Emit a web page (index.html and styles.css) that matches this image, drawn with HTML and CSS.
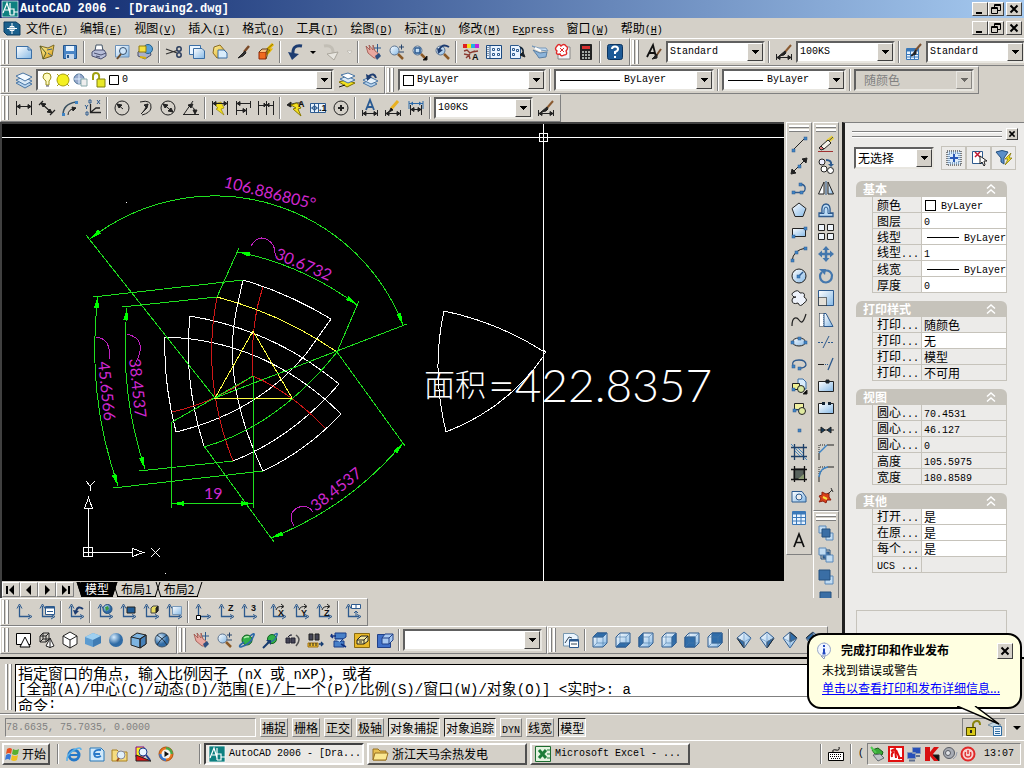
FILE: index.html
```html
<!DOCTYPE html>
<html lang="zh-CN">
<head>
    <meta charset="UTF-8">
    <meta name="viewport" content="width=device-width, initial-scale=1.0">
    <title>AutoCAD 2006 - [Drawing2.dwg]</title>
    <link rel="stylesheet" href="styles.css">
</head>
<body>
    <svg class="defs" aria-hidden="true">
        <defs>
            <linearGradient id="ice" x1="0" y1="0" x2="1" y2="1"><stop offset="0" stop-color="#fff"/><stop offset="1" stop-color="#86b9e6"/></linearGradient>
            <linearGradient id="gold" x1="0" y1="0" x2="1" y2="1"><stop offset="0" stop-color="#fff6a0"/><stop offset="1" stop-color="#d99a10"/></linearGradient>
            <radialGradient id="ball" cx=".35" cy=".3"><stop offset="0" stop-color="#d8eeff"/><stop offset="1" stop-color="#2f6ba5"/></radialGradient>
        </defs>
    </svg>

    <header class="titlebar">
        <span class="icon" data-icon="acad"></span>
        <h1>AutoCAD 2006 - [Drawing2.dwg]</h1>
        <div class="winbtns"><button aria-label="最小化" data-icon="min"></button><button aria-label="还原" data-icon="restore"></button><button aria-label="关闭" class="close" data-icon="x"></button></div>
    </header>

    <nav class="menubar">
        <span class="icon" data-icon="doc"></span>
        <button>文件<span class="en">(<u>F</u>)</span></button>
        <button>编辑<span class="en">(<u>E</u>)</span></button>
        <button>视图<span class="en">(<u>V</u>)</span></button>
        <button>插入<span class="en">(<u>I</u>)</span></button>
        <button>格式<span class="en">(<u>O</u>)</span></button>
        <button>工具<span class="en">(<u>T</u>)</span></button>
        <button>绘图<span class="en">(<u>D</u>)</span></button>
        <button>标注<span class="en">(<u>N</u>)</span></button>
        <button>修改<span class="en">(<u>M</u>)</span></button>
        <button><span class="en">E<u>x</u>press</span></button>
        <button>窗口<span class="en">(<u>W</u>)</span></button>
        <button>帮助<span class="en">(<u>H</u>)</span></button>
        <div class="winbtns"><button aria-label="最小化文档" data-icon="min"></button><button aria-label="还原文档" data-icon="restore"></button><button aria-label="关闭文档" class="close" data-icon="x"></button></div>
    </nav>

    <div class="row">
        <div class="toolbar">
            <span class="tools" data-tools="new open save | print preview publish | cut copyclip paste brush match | undo dd redo ddoff | pan zoomrt zoomwin zoomprev | props dcenter palettes sheetset markup calc | help"></span>
        </div>
        <div class="toolbar">
            <span class="tools" data-tools="textstyle"></span>
            <label class="combo"><select aria-label="文字样式"><option>Standard</option></select></label>
            <span class="tools" data-tools="| dimstyle"></span>
            <label class="combo"><select aria-label="标注样式"><option>100KS</option></select></label>
            <span class="tools" data-tools="| tablestyle"></span>
            <label class="combo"><select aria-label="表格样式"><option>Standard</option></select></label>
        </div>
    </div>
    <div class="row">
        <div class="toolbar">
            <span class="tools" data-tools="layers"></span>
            <label class="combo layer"><span class="over" data-icon="layerstate"></span><select aria-label="图层"><option>0</option></select></label>
            <span class="tools" data-tools="laycur layprev"></span>
        </div>
        <div class="toolbar">
            <label class="combo color"><span class="over swatch"></span><select aria-label="颜色"><option>ByLayer</option></select></label>
            <span class="tools" data-tools="|"></span>
            <label class="combo ltype"><span class="over rule"></span><select aria-label="线型"><option>ByLayer</option></select></label>
            <span class="tools" data-tools="|"></span>
            <label class="combo lweight"><span class="over rule"></span><select aria-label="线宽"><option>ByLayer</option></select></label>
            <span class="tools" data-tools="|"></span>
            <label class="combo plot"><select aria-label="打印样式" disabled><option>随颜色</option></select></label>
        </div>
    </div>
    <div class="row">
        <div class="toolbar">
            <span class="tools" data-tools="dimlin dimali dimarc dimord | dimrad dimjog dimdia dimang | qdim dimbase dimcont | leader tol center | dimedit dimtedit dimupd |"></span>
            <label class="combo"><select aria-label="当前标注样式"><option>100KS</option></select></label>
            <span class="tools" data-tools="dimstyle"></span>
        </div>
    </div>

    <div class="work">
        <div class="left">
            <div class="view">
                <div class="model">
                    <svg class="drawing" viewBox="2 124 782 457">
                        <defs>
                            <marker id="arrow" viewBox="0 0 10 4" refX="10" refY="2" markerWidth="12" markerHeight="5" markerUnits="userSpaceOnUse" orient="auto-start-reverse"><path d="M0 0L10 2L0 4z" fill="#0f0"/></marker>
                        </defs>
                        <text class="area" x="424" y="396">面积</text>
                        <text class="sum" x="488" y="402">=422.8357</text>
                        <!-- parts -->
                        <g class="white">
                            <path d="M243 280Q288 293 331 319L306 354Q258 412 176 432Q163 380 165 337Q266 340 341 414Q306 451 263 471Q222 385 236 312L243 280"/>
                            <path d="M204 446Q183 380 190 316Q274 330 339 384Q292 438 233 461"/>
                            <path d="M444 311Q497 322 543 351M543 357Q506 409 446 432Q431 370 444 311M543 350l3 2l-3 3"/>
                            <path d="M126 202h1M165 573h1"/>
                        </g>
                        <g class="red">
                            <path d="M217 297Q201 380 233 461M263 287Q250 325 253 376Q292 393 325 428M172 412Q213 403 253 376"/>
                        </g>
                        <g class="yellow">
                            <path d="M217 297Q282 314 337 352M215 398H292L253 331z"/>
                        </g>
                        <!-- dimensions -->
                        <g class="green">
                            <path d="M86 235L215 398L407 324M239 248L217 297M359 301L337 352L405 446M93 297L243 280M122 307L217 297M113 488L263 471M139 471L233 461M204 446L274 542M172 422L253 376M171.500 422V508M253.500 376V508M337 352Q278 426 204 447"/>
                            <g marker-start="url(#arrow)" marker-end="url(#arrow)">
                                <path d="M90 239A202 202 0 0 1 403 325"/>
                                <path d="M238 252A300 300 0 0 1 357 305"/>
                                <path d="M98 296A420 420 0 0 0 118 486"/>
                                <path d="M127 308A390 390 0 0 0 145 469"/>
                                <path d="M271 538A330 330 0 0 0 403 443"/>
                                <path d="M172 503.500H253"/>
                            </g>
                        </g>
                        <g class="dims">
                            <text transform="translate(223 187) rotate(14)">106.886805°</text>
                            <text transform="translate(274 258) rotate(23)">30.6732</text>
                            <text transform="translate(98 362) rotate(84)">45.6566</text>
                            <text transform="translate(129 359) rotate(84)">38.4537</text>
                            <text transform="translate(316 512) rotate(-38)">38.4537</text>
                            <text x="204" y="499">19</text>
                            <path d="M251 246Q258 234 268 240Q276 245 275 256M96 337Q112 339 109 359M127 334Q148 339 136 362M294 526Q287 514 297 508Q307 503 313 512"/>
                        </g>
                        <!-- ucs icon and crosshair -->
                        <g class="white">
                            <path d="M83.500 547.500h9v9h-9zM88.500 556V509M84 552.500H132M84.500 508.500h8l-4 -11zM132.500 548.500v8l11 -4z"/>
                            <path d="M86 481l4 5l5 -5M90.500 486v5M151 548l9 9M160 548l-9 9"/>
                            <path d="M2 137.500H784M543.500 124V581M539.500 133.500h8v8h-8z"/>
                        </g>
                    </svg>
                    <div class="tabs">
                        <button class="nav" aria-label="第一个" data-icon="first"></button><button class="nav" aria-label="上一个" data-icon="prev"></button><button class="nav" aria-label="下一个" data-icon="next"></button><button class="nav" aria-label="最后一个" data-icon="last"></button>
                        <button class="tab on">模型</button><button class="tab">布局1</button><button class="tab">布局2</button>
                    </div>
                </div>
                <div class="dock">
                    <div class="toolbar vert">
                        <span class="tools" data-tools="line xline pline polygon rect arc circle cloud spline ellipse ellarc insblock mkblock point hatch gradient region table mtext"></span>
                    </div>
                </div>
                <div class="dock">
                    <div class="toolbar vert">
                        <span class="tools" data-tools="erase copy mirror offset array move rotate scale stretch trim extend breakpt break join chamfer fillet explode"></span>
                    </div>
                    <div class="toolbar vert">
                        <span class="tools" data-tools="front back above under"></span>
                    </div>
                </div>
            </div>
            <div class="lower">
                <div class="row">
                    <div class="toolbar">
                        <span class="tools" data-tools="ucs ucsdlg | ucsprev | ucsworld ucsobj ucsface ucsview | ucsorg ucsz ucs3 | ucsrx ucsry ucsrz | ucsapply"></span>
                    </div>
                </div>
                <div class="row">
                    <div class="toolbar">
                        <span class="tools" data-tools="wire2d wire3d hidden flat gouraud flatedge gouredge"></span>
                    </div>
                    <div class="toolbar">
                        <span class="tools" data-tools="pan zoomrt orbit corbit swivel dist clip front3 back3 |"></span>
                        <label class="combo views"><select aria-label="视图"><option></option></select></label>
                    </div>
                    <div class="toolbar">
                        <span class="tools" data-tools="named | vtop vbottom vleft vright vfront vback | vsw vse vne vnw"></span>
                    </div>
                </div>
            </div>
        </div>

        <aside class="props">
            <div class="caption"><span class="bars"></span><button aria-label="关闭特性" data-icon="x"></button></div>
            <div class="pick">
                <label class="combo zh"><select aria-label="选择对象"><option>无选择</option></select></label>
                <div class="picks"><button aria-label="PICKADD" data-icon="pickadd"></button><button aria-label="选择对象" data-icon="selobj"></button><button aria-label="快速选择" data-icon="qselect"></button></div>
            </div>
            <section>
                <h2>基本<span class="icon" data-icon="chev"></span></h2>
                <table>
                    <tr><th>颜色</th><td><span class="swatch"></span><span class="en">ByLayer</span></td></tr>
                    <tr><th>图层</th><td><span class="en">0</span></td></tr>
                    <tr><th>线型</th><td><span class="rule"></span><span class="en">ByLayer</span></td></tr>
                    <tr><th>线型<span class="en">...</span></th><td><span class="en">1</span></td></tr>
                    <tr><th>线宽</th><td><span class="rule"></span><span class="en">ByLayer</span></td></tr>
                    <tr><th>厚度</th><td><span class="en">0</span></td></tr>
                </table>
            </section>
            <section>
                <h2>打印样式<span class="icon" data-icon="chev"></span></h2>
                <table>
                    <tr><th>打印<span class="en">...</span></th><td class="ro">随颜色</td></tr>
                    <tr><th>打印<span class="en">...</span></th><td>无</td></tr>
                    <tr><th>打印<span class="en">...</span></th><td class="ro">模型</td></tr>
                    <tr><th>打印<span class="en">...</span></th><td class="ro">不可用</td></tr>
                </table>
            </section>
            <section>
                <h2>视图<span class="icon" data-icon="chev"></span></h2>
                <table>
                    <tr><th>圆心<span class="en">...</span></th><td class="ro"><span class="en">70.4531</span></td></tr>
                    <tr><th>圆心<span class="en">...</span></th><td class="ro"><span class="en">46.127</span></td></tr>
                    <tr><th>圆心<span class="en">...</span></th><td class="ro"><span class="en">0</span></td></tr>
                    <tr><th>高度</th><td class="ro"><span class="en">105.5975</span></td></tr>
                    <tr><th>宽度</th><td class="ro"><span class="en">180.8589</span></td></tr>
                </table>
            </section>
            <section>
                <h2>其他<span class="icon" data-icon="chev"></span></h2>
                <table>
                    <tr><th>打开<span class="en">...</span></th><td>是</td></tr>
                    <tr><th>在原<span class="en">...</span></th><td>是</td></tr>
                    <tr><th>每个<span class="en">...</span></th><td>是</td></tr>
                    <tr><th><span class="en">UCS ...</span></th><td class="ro"></td></tr>
                </table>
            </section>
            <div class="hint"></div>
        </aside>
    </div>

    <section class="command">
        <span class="grip"></span>
        <div class="console">
            <p><span class="c">指定窗口的角点，输入比例因子</span> (nX <span class="c">或</span> nXP)<span class="c">，或者</span></p>
            <p>[<span class="c">全部</span>(A)/<span class="c">中心</span>(C)/<span class="c">动态</span>(D)/<span class="c">范围</span>(E)/<span class="c">上一个</span>(P)/<span class="c">比例</span>(S)/<span class="c">窗口</span>(W)/<span class="c">对象</span>(O)] &lt;<span class="c">实时</span>&gt;: a</p>
            <label class="prompt"><span class="c">命令</span>:<input type="text" aria-label="命令"></label>
        </div>
    </section>

    <footer class="status">
        <output class="coords">78.6635, 75.7035, 0.0000</output>
        <button>捕捉</button>
        <button>栅格</button>
        <button>正交</button>
        <button>极轴</button>
        <button class="on">对象捕捉</button>
        <button class="on">对象追踪</button>
        <button><span class="en">DYN</span></button>
        <button>线宽</button>
        <button class="on">模型</button>
        <div class="locks"><span class="icon" data-icon="lock"></span><span class="icon" data-icon="plotter"></span></div>
        <span class="more"></span>
    </footer>

    <div class="taskbar">
        <button class="start"><span class="icon" data-icon="flag"></span>开始</button>
        <span class="split"></span>
        <div class="quick"><span class="icon" data-icon="ie"></span><span class="icon" data-icon="outlook"></span><span class="icon" data-icon="search"></span><span class="icon" data-icon="view"></span><span class="icon" data-icon="wmp"></span></div>
        <span class="split"></span>
        <button class="task on"><span class="icon" data-icon="acad"></span><span class="en">AutoCAD 2006 - [Dra...</span></button>
        <button class="task"><span class="icon" data-icon="folder"></span>浙江天马余热发电</button>
        <button class="task"><span class="icon" data-icon="excel"></span><span class="en">Microsoft Excel - ...</span></button>
        <div class="lang"><span class="split"></span><span class="icon" data-icon="keyboard"></span><span class="split"></span><span class="en">(</span></div>
        <div class="tray"><span class="icon" data-icon="safe"></span><span class="icon" data-icon="rising"></span><span class="icon" data-icon="net"></span><span class="icon" data-icon="kav"></span><span class="icon" data-icon="sound"></span><span class="icon" data-icon="power"></span><time class="en">13:07</time></div>
    </div>

    <div class="balloon" role="status">
        <h3><span class="icon" data-icon="info"></span>完成打印和作业发布</h3>
        <button aria-label="关闭" data-icon="x"></button>
        <p>未找到错误或警告</p>
        <a href="#">单击以查看打印和发布详细信息...</a>
        <svg class="tail" viewBox="0 0 46 20"><path d="M0 0L42 18L18 0" fill="#ffffe1" stroke="#000" stroke-width="1.500"/></svg>
    </div>

    <script src="script.js"></script>
</body>
</html>
```

FILE: styles.css
```css
*, *::before, *::after {
    box-sizing: border-box;
}
body {
    margin: 0;
    height: 100vh;
    display: flex;
    flex-direction: column;
    overflow: hidden;
    position: relative;
    background: #d4d0c8;
    color: #000;
    font: 12px/16px "Noto Sans CJK SC", sans-serif;
}
h1, h2, h3, p {
    margin: 0;
}
button, select, input {
    font: inherit;
    color: inherit;
    margin: 0;
    padding: 0;
    border: 0;
    background: none;
    border-radius: 0;
}
.en {
    font-family: "Liberation Mono", monospace;
    font-size: 10px;
    line-height: 10px;
}
.defs {
    position: absolute;
    width: 0;
    height: 0;
}
.icon, [data-icon] {
    display: inline-flex;
    align-items: center;
    justify-content: center;
    flex: none;
}
svg.i {
    width: 16px;
    height: 16px;
    flex: none;
    fill: none;
    stroke: #222;
    overflow: visible;
}
svg.i text {
    font: bold 9px "Liberation Sans", sans-serif;
    fill: #111;
    stroke: none;
}

/* title and menu */
.titlebar {
    height: 18px;
    flex: none;
    display: flex;
    align-items: center;
    gap: 2px;
    padding-left: 2px;
    background: linear-gradient(to right, #0a246a, #a6caf0);
    color: #fff;
}
.titlebar h1 {
    font: bold 12px/18px "Liberation Mono", monospace;
}
.menubar {
    height: 20px;
    flex: none;
    display: flex;
    align-items: center;
    padding-left: 4px;
}
.menubar > button {
    padding: 0 6px;
    white-space: nowrap;
}
.winbtns {
    display: flex;
    margin-left: auto;
    padding-right: 2px;
}
.winbtns button, .caption button, .balloon button {
    width: 16px;
    height: 14px;
    background: #d4d0c8;
    border: 1px solid;
    border-color: #fff #404040 #404040 #fff;
}
.winbtns .close {
    margin-left: 2px;
}

/* toolbars */
.row {
    height: 28px;
    flex: none;
    display: flex;
    overflow: hidden;
}
.toolbar {
    display: flex;
    align-items: center;
    flex: none;
    padding: 0 3px 0 1px;
    border: 1px solid;
    border-color: #fff #808080 #808080 #fff;
}
.toolbar::before, .grip {
    content: "";
    flex: none;
    width: 8px;
    height: 24px;
    margin-right: 2px;
    background: linear-gradient(to right, #fff 2px, #808080 2px, #808080 3px, #d4d0c8 3px, #d4d0c8 4px, #fff 4px, #fff 6px, #808080 6px, #808080 7px, #d4d0c8 7px);
}
.tools {
    display: flex;
    align-items: center;
}
.tools button {
    width: 23px;
    height: 22px;
    display: flex;
    align-items: center;
    justify-content: center;
}
.tools .dd {
    width: 13px;
}
.sep {
    width: 2px;
    height: 22px;
    margin: 0 2px;
    border-left: 1px solid #808080;
    border-right: 1px solid #fff;
}
.combo {
    position: relative;
    display: block;
    height: 22px;
    width: 99px;
    margin: 0 1px;
    background: #fff;
    border: 2px solid;
    border-color: #606060 #e8e6e0 #e8e6e0 #606060;
}
.combo::after {
    content: "";
    position: absolute;
    right: 0;
    top: 0;
    width: 16px;
    height: 18px;
    pointer-events: none;
    border: 1px solid;
    border-color: #fff #404040 #404040 #fff;
    background: linear-gradient(#000, #000) 50% 6px / 7px 1px no-repeat, linear-gradient(#000, #000) 50% 7px / 5px 1px no-repeat, linear-gradient(#000, #000) 50% 8px / 3px 1px no-repeat, linear-gradient(#000, #000) 50% 9px / 1px 1px no-repeat, #d4d0c8;
}
.combo select {
    display: block;
    appearance: none;
    width: 100%;
    height: 18px;
    padding-left: 2px;
    font: 10px/18px "Liberation Mono", monospace;
}
.combo.zh select, .combo.plot select {
    font: 12px/18px "Noto Sans CJK SC", sans-serif;
}
.over {
    position: absolute;
    left: 4px;
    top: 0;
    height: 18px;
    pointer-events: none;
}
.over svg.i {
    width: 78px;
    height: 18px;
}
.swatch {
    display: inline-block;
    width: 11px;
    height: 11px;
    border: 1px solid #000;
    background: #fff;
}
.rule {
    display: inline-block;
    width: 32px;
    height: 1px;
    background: #000;
    vertical-align: middle;
}
.over.swatch {
    top: 4px;
    left: 3px;
    height: 11px;
}
.over.rule {
    top: 9px;
    height: 1px;
}
.combo.layer {
    width: 298px;
}
.combo.layer select {
    padding-left: 84px;
}
.combo.color {
    width: 148px;
}
.combo.color select {
    padding-left: 17px;
}
.combo.ltype {
    width: 160px;
}
.ltype .rule {
    width: 60px;
}
.combo.ltype select {
    padding-left: 68px;
}
.combo.lweight {
    width: 124px;
}
.lweight .rule {
    width: 35px;
}
.combo.lweight select {
    padding-left: 43px;
}
.combo.plot {
    width: 120px;
    background: #d4d0c8;
}
.combo.plot::after {
    opacity: 0.5;
}
.combo.plot select {
    padding-left: 8px;
    color: #808080;
    opacity: 1;
}
.combo.views {
    width: 139px;
}

/* work area */
.work {
    flex: 1;
    min-height: 0;
    display: grid;
    grid-template-columns: 1fr 182px;
}
.left {
    min-width: 0;
    min-height: 0;
    display: flex;
    flex-direction: column;
}
.view {
    flex: 1;
    min-height: 0;
    display: flex;
    overflow: hidden;
}
.model {
    flex: 1;
    min-width: 0;
    display: flex;
    flex-direction: column;
    border: solid #404040;
    border-width: 2px 0 0 2px;
}
.drawing {
    flex: 1;
    min-height: 0;
    width: 100%;
    display: block;
    background: #000;
    fill: none;
    stroke-width: 1;
    shape-rendering: crispEdges;
}
.white {
    stroke: #fff;
}
.red {
    stroke: #d01818;
}
.yellow {
    stroke: #ff4;
}
.green {
    stroke: #1fe01f;
}
.area {
    font: 300 31px "Noto Sans CJK SC", sans-serif;
    fill: #fff;
}
.sum {
    font: 300 46px "Lato", sans-serif;
    fill: #fff;
}
.dims {
    stroke: #c020c0;
}
.dims text {
    font: 16px "Lato", sans-serif;
    fill: #d028d0;
    stroke: none;
}
.tabs {
    height: 17px;
    flex: none;
    display: flex;
    align-items: center;
    background: #d4d0c8;
}
.nav {
    width: 18px;
    height: 15px;
    border: 1px solid;
    border-color: #fff #808080 #808080 #fff;
}
.tab {
    position: relative;
    height: 15px;
    padding: 0 4px;
    margin-left: 4px;
    line-height: 14px;
    border-bottom: 1px solid #000;
}
.tab::before, .tab::after {
    content: "";
    position: absolute;
    top: 0;
    bottom: -1px;
    left: -2px;
    width: 4px;
    border-left: 1px solid #000;
    transform: skewX(18deg);
}
.tab::after {
    left: auto;
    right: -2px;
    border-left: 0;
    border-right: 1px solid #000;
    transform: skewX(-18deg);
}
.tab.on {
    background: #000;
    color: #fff;
    margin-left: 7px;
}
.tab.on::before, .tab.on::after {
    background: #000;
}
.dock {
    width: 29px;
    flex: none;
    display: flex;
    flex-direction: column;
}
.model + .dock {
    padding-left: 2px;
}
.vert {
    width: 26px;
    flex-direction: column;
    padding: 2px 0 3px;
}
.vert::before {
    width: 20px;
    height: 8px;
    margin: 0;
    background: linear-gradient(#fff 2px, #808080 2px, #808080 3px, #d4d0c8 3px, #d4d0c8 4px, #fff 4px, #fff 6px, #808080 6px, #808080 7px, #d4d0c8 7px);
}
.vert .tools {
    flex-direction: column;
}
.lower {
    flex: none;
    height: 59px;
    overflow: hidden;
}

/* properties palette */
.props {
    min-height: 0;
    overflow: hidden;
    background: #ecebe9;
    border-left: 3px solid #202020;
    border-top: 1px solid #808080;
    padding: 3px 17px 0 11px;
}
.caption {
    display: flex;
    align-items: center;
    gap: 4px;
    height: 16px;
    margin: 0 -11px 5px -4px;
}
.bars {
    flex: 1;
    height: 6px;
    border: solid #808080;
    border-width: 1px 0;
    box-shadow: inset 0 1px #fff, 0 1px #fff;
}
.caption button {
    width: 12px;
    height: 12px;
}
.caption svg.i {
    width: 12px;
    height: 12px;
}
.pick {
    display: flex;
    align-items: center;
    gap: 6px;
    height: 22px;
    margin: 0 -7px 12px -3px;
}
.pick .combo {
    width: 80px;
    flex: none;
}
.picks {
    display: flex;
}
.picks button {
    width: 25px;
    height: 24px;
    border: 1px solid #c6c3bb;
}
.props section {
    margin-bottom: 8px;
}
.props h2 {
    height: 16px;
    display: flex;
    justify-content: space-between;
    padding: 0 8px 0 7px;
    background: #c6c3bb;
    border-radius: 6px 6px 0 0;
    color: #fff;
    font-size: 12px;
    line-height: 15px;
}
.props table {
    width: calc(100% - 16px);
    margin-left: 16px;
    border-spacing: 0;
    table-layout: fixed;
    border-left: 1px solid #c6c3bb;
}
.props th, .props td {
    height: 16px;
    padding: 0 0 0 4px;
    overflow: hidden;
    border: solid #c6c3bb;
    border-width: 0 1px 1px 0;
    font-weight: normal;
    line-height: 13px;
    text-align: left;
    white-space: nowrap;
}
.props td {
    padding-left: 2px;
    background: #fff;
}
.props th {
    width: 49px;
}
.props td.ro {
    background: #ecebe9;
}
td .swatch {
    margin: 0 5px 0 1px;
    vertical-align: middle;
}
td .rule {
    margin: 0 5px 0 3px;
}
.hint {
    height: 60px;
    margin-top: 37px;
    border: 1px solid #c6c3bb;
}

/* command line */
.command {
    height: 57px;
    flex: none;
    display: flex;
    padding: 5px 24px 1px 5px;
    border-top: 2px solid #000;
    border-bottom: 1px solid #808080;
}
.command .grip {
    height: 46px;
}
.console {
    flex: 1;
    padding: 0 2px;
    overflow: hidden;
    background: #fff;
    border: 1px solid #000;
    border-color: #000 #fff #fff #000;
    font: 14px/15px "Liberation Mono", monospace;
    white-space: nowrap;
}
.c {
    font-family: "Noto Sans CJK SC", sans-serif;
    font-size: 15px;
}
.console p {
    height: 15px;
}
.prompt {
    display: flex;
    height: 17px;
    margin: 1px -2px 0;
    padding: 0 2px;
    border-top: 1px solid #808080;
}
.prompt input {
    flex: 1;
    outline: 0;
}

/* status bar */
.status {
    height: 26px;
    flex: none;
    display: flex;
    align-items: center;
    gap: 4px;
    padding: 0 3px 0 5px;
    border-top: 1px solid #fff;
}
.coords {
    width: 251px;
    height: 19px;
    border: 1px solid #808080;
    border-right-color: #fff;
    border-bottom-color: #fff;
    color: #808080;
    font: 10px/17px "Liberation Mono", monospace;
}
.status button {
    height: 19px;
    padding: 0 1px;
    line-height: 17px;
    border: 1px solid;
    border-color: #fff #808080 #808080 #fff;
    white-space: nowrap;
}
.status .on {
    border-color: #202020 #fff #fff #202020;
    background: #e4e2dc;
}
.locks {
    display: flex;
    gap: 6px;
    margin-left: auto;
    height: 19px;
    padding: 0 2px;
    border: 1px solid;
    border-color: #808080 #fff #fff #808080;
}
.more {
    margin-left: 3px;
    border: 4px solid transparent;
    border-top-color: #000;
    border-bottom: 0;
}

/* taskbar */
.taskbar {
    height: 28px;
    flex: none;
    display: flex;
    align-items: center;
    gap: 3px;
    padding: 0 3px 2px 2px;
    border-top: 1px solid #fff;
}
.start, .task {
    display: flex;
    align-items: center;
    height: 22px;
    border: 2px solid;
    border-color: #fff #505050 #505050 #fff;
    white-space: nowrap;
}
.start {
    width: 48px;
    gap: 2px;
    margin-right: 4px;
}
.task {
    width: 160px;
    gap: 4px;
    padding-left: 3px;
}
.task.on {
    border-color: #404040 #fff #fff #404040;
    background: #ebe9e5;
}
.split {
    width: 2px;
    height: 20px;
    border-left: 1px solid #808080;
    border-right: 1px solid #fff;
}
.quick {
    display: flex;
    gap: 7px;
    padding: 0 22px 0 4px;
}
.lang {
    display: flex;
    align-items: center;
    gap: 6px;
    margin-left: auto;
}
.tray {
    display: flex;
    align-items: center;
    gap: 2px;
    height: 22px;
    padding: 0 6px 0 2px;
    border: 1px solid;
    border-color: #808080 #fff #fff #808080;
}
.tray time {
    margin-left: 6px;
}

/* balloon */
.balloon {
    position: absolute;
    right: 2px;
    bottom: 59px;
    width: 215px;
    height: 76px;
    padding: 6px 8px 0 13px;
    background: #ffffe1;
    border: 2px solid #000;
    border-radius: 14px;
}
.balloon h3 {
    display: flex;
    align-items: center;
    gap: 9px;
    height: 18px;
    margin-left: -6px;
    font-size: 12px;
}
.balloon p {
    height: 20px;
    line-height: 22px;
}
.balloon a {
    display: block;
    color: #00f;
    line-height: 18px;
    white-space: nowrap;
}
.balloon button {
    position: absolute;
    right: 7px;
    top: 8px;
    width: 16px;
    height: 16px;
}
.tail {
    position: absolute;
    left: 148px;
    top: 71px;
    width: 46px;
    height: 20px;
}
```

FILE: script.js
```js
const B = '#2d5a8e';

// shared pieces
const axes = `<path d="M3.500 2V12.500H14" stroke="${B}" stroke-width="1.300"/><path d="M1 4.500L3.500 0L6 4.500M12 10.500L16 12.500L12 15" stroke="${B}"/>`;
const lens = '<circle cx="6.500" cy="6.500" r="4.500" fill="url(#ice)" stroke="#5c7390"/><path d="M10 10L15 15" stroke="#8a5a28" stroke-width="2.500"/>';
const brush = '<path d="M15 1L9 8" stroke="#8a5a30" stroke-width="2"/><path d="M9 7L3 12L8 11L10 9z" fill="#222"/>';
const dimbar = '<path d="M.5 10v6M15.500 10v6M1 13.500h14"/><path d="M1 13.500l3 -2v4zM15 13.500l-3 -2v4z" fill="#222"/>';
const bolt = '<path d="M9 2L2 4L6 8L4 9L12 15L9 9L12 8z" fill="#f5e020" stroke="#8a7a00" stroke-width=".6"/>';
const spot = (x, y) => `<rect x="${x - 1}" y="${y - 1}" width="3" height="3" fill="#3f84c4" stroke="${B}" stroke-width=".5"/>`;

function cube(face) {
    const faces = {
        front: 'M1 5h10v10h-10z',
        top: 'M1 5L5 1H15L11 5z',
        right: 'M11 5L15 1V11L11 15z',
        back: 'M5 1h10v10h-10z',
        left: 'M1 5L5 1V11L1 15z',
        bottom: 'M1 15L5 11H15L11 15z'
    };
    return `<path d="M1 5L5 1H15V11L11 15H1z" fill="url(#ice)" stroke="${B}"/><path d="${faces[face]}" fill="#2f6daa" stroke="${B}"/><path d="M1 5H11V15M11 5L15 1M5 1V11H15M5 11L1 15" stroke="#4878aa" stroke-width=".6"/>`;
}

function gem(d) {
    return `<path d="M8 0L15 6L8 16L1 6z" fill="url(#ice)" stroke="${B}"/><path d="${d}" fill="#2f6daa"/><path d="M8 0V16M1 6L8 10L15 6" stroke="#6a9aca" stroke-width=".7"/>`;
}

const hand = '<path d="M1 2L5 6L4 1L8 6L8 1L10 7L13 9L13 14L9 14L3 9z" fill="#e8a8a0" stroke="#9a5048" stroke-width=".8"/><path d="M10 12l4 -3l2 3l-4 4z" fill="#2d4f80" stroke="none"/>';

const icons = {
    acad: '<rect width="16" height="16" fill="#0e8080" stroke="#fff" stroke-width=".7"/><path d="M1 12L5 2L8 12M3 9H7M8 2V14M8 8H12V14H8M12 11H16" stroke="#fff" stroke-width="1.200"/>',
    doc: '<path d="M0 2H12L16 5V15H3L0 12z" fill="#1b608c" stroke="#0d3d60"/><path d="M8 3V14M3 8.500H13M6 6.500h4v4h-4z" stroke="#fff"/>',
    min: '<path d="M4 12H10" stroke="#000" stroke-width="2"/>',
    restore: '<path d="M6.500 6V3.500H12.500V9.500H10M6 4.500H13M3.500 6.500H9.500V12.500H3.500zM3 7.500H10" stroke="#000"/>',
    x: '<path d="M4.500 4.500L11.500 11.500M11.500 4.500L4.500 11.500" stroke="#000" stroke-width="2"/>',
    'new': '<path d="M.5 2.500H12L15.500 6V14.500H.5z" fill="url(#ice)" stroke="#3a6ea5"/><path d="M12 2.500V6H15.500" stroke="#3a6ea5"/>',
    open: '<path d="M1 2L9 4L15 1L13 12L4 15z" fill="url(#gold)" stroke="#7a6820"/><path d="M1 2L7 9L4 15" stroke="#4a5a30"/><path d="M9 9L13 12M8 6L13 5" stroke="#406080"/>',
    save: '<path d="M1.500 1.500H14.500V14.500H1.500z" fill="#4b86c6" stroke="#24558c"/><path d="M4 2h8v5h-8z" fill="#e8f4ff" stroke="none"/><path d="M4 10h8v5h-8z" fill="#c8d8ea" stroke="none"/><path d="M6 11v3" stroke="#24558c" stroke-width="2"/>',
    print: '<path d="M4 7L5 1L11 1L12 7" fill="#fff" stroke="#456"/><path d="M1 8L4 6H13L15 9V12L10 15L1 12z" fill="#b7bdd8" stroke="#4a5070"/><path d="M3 9L10 11L15 9M5 12L9 13" stroke="#4a5070"/>',
    preview: '<path d="M1.500 1.500H15V13H1.500z" fill="url(#ice)" stroke="#6a90b8"/><circle cx="9" cy="7" r="3.500" fill="#cfe6fa" stroke="#35506e"/><path d="M7 10L3 15" stroke="#6a4a28" stroke-width="2"/>',
    publish: '<path d="M1 8L5 5L13 7L14 11L8 15L1 12z" fill="#a9afca" stroke="#484e68"/><circle cx="11" cy="5" r="4.500" fill="#5aa0d8" stroke="#20608a"/><path d="M2 2h7v6h-7z" fill="#f5e040" stroke="#907c10"/><path d="M3 13l6 1" stroke="#d8b010" stroke-width="2"/>',
    cut: '<path d="M0 5L11 9M0 10L11 6.500" stroke="#333" stroke-width="1.300"/><circle cx="13" cy="5" r="2.200" stroke="#2a3c5c" stroke-width="1.500"/><circle cx="13" cy="11" r="2.200" stroke="#2a3c5c" stroke-width="1.500"/>',
    copyclip: '<path d="M.5 1.500H11.500V10.500H.5z" fill="#eaf5ff" stroke="#3a6ea5"/><path d="M4.500 4.500H13L15.500 7V14.500H4.500z" fill="url(#ice)" stroke="#3a6ea5"/>',
    paste: '<path d="M2 3L8 1L14 8L12 13L5 14L1 9z" fill="url(#gold)" stroke="#8a6a20"/><path d="M6 6h6l3 3v5h-9z" fill="#d8ecfc" stroke="#3a6ea5"/>',
    brush: '<path d="M14 2L9 8" stroke="#7a4a28" stroke-width="2.500"/><path d="M10 7L3 14L8 12L11 9z" fill="#333"/>',
    match: '<path d="M15 0L9 6L12 6L7 12" stroke="#e8b800" stroke-width="3"/><path d="M15 0L8 6L12 6L8 11" stroke="#6a5a00" stroke-width=".7"/><path d="M1 8h7v7h-7z" fill="#f06a20" stroke="#902808"/><path d="M1 8L4 5H10L8 8M9 7v5l-1 3" fill="#f8c080" stroke="#604020"/>',
    undo: '<path d="M15 2Q5 0 6 11" stroke="#1d3c70" stroke-width="3"/><path d="M1 8L12 10L5 16z" fill="#1d3c70" stroke="none"/>',
    dd: '<path d="M5 7h6l-3 3z" fill="#000" stroke="none"/>',
    ddoff: '<path d="M6 7h5l-2 3z" fill="#f4f3f0" stroke="#a8a49c" stroke-width=".5"/>',
    redo: '<path d="M1 2Q11 0 10 11" stroke="#c2beb5" stroke-width="3"/><path d="M15 8L4 10L11 16z" fill="#e8e6e0" stroke="#aaa69c"/>',
    pan: hand + '<path d="M12.500 0V8M9 4H16" stroke="#2d5a8e"/>',
    zoomrt: lens + '<path d="M11 3h5M13.500 .5v5M11 8h5" stroke="#26446c"/>',
    zoomwin: lens + '<path d="M4 4h5v5h-5z" stroke="#2d5a8e" stroke-width="1.500"/><path d="M16 12v4h-4z" fill="#000"/>',
    zoomprev: lens + '<path d="M15 3Q8 -1 5 6" stroke="#1d3c70" stroke-width="2"/><path d="M3 4l6 2l-5 4z" fill="#1d3c70" stroke="none"/>',
    props: '<path d="M0 0h4v4h-4z" fill="#e02020" stroke="none"/><path d="M4 0h4v4h-4z" fill="#f0e020" stroke="none"/><path d="M8 0h4v4h-4z" fill="#20b0e0" stroke="none"/><path d="M12 0h4v4h-4z" fill="#c020e0" stroke="none"/><path d="M1 7l3 -1l3 3l5 -2M1 10l5 1l1 4M3 14L7 10M9 8l6 -1" stroke="#8a3a30" stroke-width="1.400"/><text x="9" y="16">A</text>',
    dcenter: '<path d="M.5 1.500h15v13h-15z" fill="#eaf4ff" stroke="#1c4a80"/><path d="M4 2v12" stroke="#1c4a80"/><path d="M2 3v10" stroke="#234" stroke-dasharray="1 1"/><path d="M6.500 4.500h2v2h-2zM11.500 4.500h2v2h-2zM6.500 9.500h2v2h-2zM11.500 9.500h2v2h-2z" fill="#fff" stroke="#2d5a8e"/>',
    palettes: '<path d="M1.500 1.500h8l2 2v11h-10z" fill="#eaf4ff" stroke="#2d5a8e"/><path d="M3.500 4.500h2v2h-2zM3.500 9.500h2v2h-2zM7.500 5.500h2v2h-2z" stroke="#2d5a8e"/><path d="M11 3Q15 5 14 9" stroke="#123" stroke-width="1.500"/><path d="M11 11l3 -3l2 5z" fill="#123"/>',
    sheetset: '<path d="M0 2L7 4L14 4L16 7L8 6z" fill="#c8dff4" stroke="#7898b8"/><path d="M1 6L8 9L15 8L14 13L7 14L5 11z" fill="#8cb4da" stroke="#5c80a4"/><path d="M3 4l6 3" stroke="#fff" stroke-width="2"/>',
    markup: '<path d="M3 3h12v12h-12z" fill="#f0f4f8" stroke="#888"/><path d="M2 2Q4 -1 6 2Q9 -1 11 2Q14 4 11 7Q13 11 9 11Q6 13 5 10Q0 11 2 7Q-1 5 2 2z" fill="#fff" stroke="#e02828" stroke-width="1.400"/><path d="M5 4l4 4M9 4l-4 4" stroke="#e02828"/>',
    calc: '<path d="M2.500 .5h11v15h-11z" fill="#222"/><path d="M4 2h8v3h-8z" fill="#d83030" stroke="none"/><path d="M4 8h8M4 11h8M4 14h8" stroke="#cfd8cf" stroke-width="1.500" stroke-dasharray="2 1"/>',
    help: '<rect x=".5" y=".5" width="15" height="15" rx="2" fill="#1d5a96" stroke="#0d3560"/><path d="M5 5Q5 2.500 8 2.500Q11 2.500 11 5Q11 7 8 8V10M8 12v2" stroke="#fff" stroke-width="2"/>',
    textstyle: '<path d="M1 13L7 1L10 13M3 9H9" stroke="#111" stroke-width="1.800"/><path d="M15 5L10 12" stroke="#7a5030" stroke-width="2"/><path d="M11 10l-5 5l5 -1z" fill="#222"/>',
    dimstyle: brush + dimbar,
    tablestyle: '<path d="M.5 4.500h12v11h-12z" fill="#e8f3ff" stroke="#3a78b8"/><path d="M1 6h12" stroke="#3a78b8" stroke-width="3"/><path d="M1 10.500h11M1 13h11M4.500 5v10M8.500 5v10" stroke="#3a78b8"/><path d="M15 0L9 7" stroke="#7a5030" stroke-width="2"/><path d="M10 6l-5 6l5 -2z" fill="#222"/>',
    layers: '<path d="M0 11L7 8L16 12L9 16z" fill="#b8d4ee" stroke="#4a76a4"/><path d="M0 8L7 5L16 9L9 13z" fill="#d8e8f6" stroke="#4a76a4"/><path d="M0 4L7 1L16 5L9 9z" fill="#f4faff" stroke="#4a76a4"/>',
    laycur: '<path d="M0 10L7 8L16 11L8 15z" fill="#f0e020" stroke="#807000"/><path d="M1 7L8 4L16 8L9 11z" fill="#d8e8f6" stroke="#4a76a4"/><path d="M2 3L9 1L16 4L9 7z" fill="#fff" stroke="#4a76a4"/><path d="M0 15l6 -2" stroke="#111"/>',
    layprev: '<path d="M1 11L8 8L15 12L9 15z" fill="#b8d4ee" stroke="#4a76a4"/><path d="M1 8L8 5L16 9L9 12z" fill="#e8f2fa" stroke="#4a76a4"/><path d="M14 6Q12 0 7 4" stroke="#1d3c70" stroke-width="2"/><path d="M4 2l6 3l-5 4z" fill="#1d3c70" stroke="none"/>',
    layerstate: '<path d="M1 6Q1 2 5 2Q9 2 9 6Q9 8 7 10V14H4V10Q1 8 1 6z" fill="#fffbc0" stroke="#9a9018"/><path d="M4 15h3" stroke="#557"/><circle cx="21" cy="9" r="6" fill="#f4f020" stroke="#a8a010"/><path d="M15 3l2 2M27 3l-2 2M15 15l2 -2M27 15l-2 -2" stroke="#a8a010"/><circle cx="37" cy="8" r="5" fill="#9ac" stroke="#4e7498"/><path d="M37 3v10M32 8h10" stroke="#def"/><path d="M39 8h6v7h-6z" fill="#eee" stroke="#8aa"/><path d="M51 9V5Q51 2 54 2Q58 2 57 8" stroke="#a0a010" stroke-width="2"/><path d="M55 8h8v8h-8z" fill="#e8e828" stroke="#808010"/><path d="M67.500 4.500h9v9h-9z" fill="#fff" stroke="#000"/>',
    dimlin: '<path d="M.5 1v14M15.500 1v14M1 6.500h14"/><path d="M1 6.500l3 -2v4zM15 6.500l-3 -2v4z" fill="#222"/>',
    dimali: '<path d="M4 1L0 5M16 10L11 15M2 3L13 13" stroke-width="1.200"/><path d="M2 3l5 1l-3 3zM13 13l-5 -1l3 -3z" fill="#222"/>',
    dimarc: '<path d="M1 15Q1 4 14 2" stroke="#3a5060" stroke-width="1.500"/><path d="M6 15Q6 9 14 8"/><path d="M0 13h3v3h-3zM13 1h3v3h-3z" fill="#3f84c4" stroke="none"/><path d="M14 8l-4 -1l1 4z" fill="#222"/>',
    dimord: '<path d="M5.500 4V12.500H16M6 12L11 8H15" stroke="#222" stroke-width="1.300"/><path d="M4 0h2v3h-2zM12 0l3 4M15 0l-3 4M0 5l1.500 2l1.500 -2M1.500 7v2M1 12h2v3h-2z" stroke="#2d5a8e"/>',
    dimrad: '<circle cx="8" cy="8" r="7"/><path d="M3 4L9 9"/><path d="M3 4l5 1l-3 3z" fill="#222"/>',
    dimjog: '<path d="M3 2Q15 -1 14 8Q13 13 5 15"/><path d="M11 4L8 9L10 8L4 14M11 4l-4 1l3 3z" fill="#333"/>',
    dimdia: '<circle cx="8" cy="8" r="7"/><path d="M3 4L13 12"/><path d="M3 4l5 1l-3 3zM13 12l-5 -1l3 -3z" fill="#222"/>',
    dimang: '<path d="M0 14.500H16M1 14L10 1"/><path d="M6 5Q12 7 12 13"/><path d="M12 14l-2 -4h4zM5 5l5 -1l-2 4z" fill="#222"/>',
    qdim: bolt + '<path d="M.5 1v14M15.500 1v14M1 3.500h14"/><path d="M1 3.500l3 -2v4zM15 3.500l-3 -2v4z" fill="#222"/>',
    dimbase: '<path d="M1.500 1v14M15.500 1v7M2 3.500h13M11.500 8v7M2 10.500h9"/><path d="M2 3.500l3 -2v4zM11 10.500l-3 -2v4z" fill="#222"/>',
    dimcont: '<path d="M.5 1v14M8.500 1v14M15.500 1v14M1 5.500h14"/><path d="M6 3l2 2l-2 2zM11 3l-2 2l2 2z" fill="#222"/>',
    leader: '<path d="M15 3H9L1 5" /><path d="M0 5l4 -3v5z" fill="#222"/><path d="M10 3L4 5L9 8L6 9L14 16L11 9L14 8z" fill="#f5e020" stroke="#8a7a00"/><text x="11" y="7">A</text>',
    tol: '<path d="M.5 3.500h15v9h-15zM8.500 4v8" fill="#e8f4ff" stroke="#2d5a8e"/><circle cx="4.500" cy="8" r="2" stroke="#2d5a8e"/><path d="M4.500 4v8M1 8h7" stroke="#2d5a8e"/><text x="9" y="11">.1</text>',
    center: '<circle cx="8" cy="8" r="7"/><path d="M8 5v6M5 8h6" stroke-width="2"/>',
    dimedit: '<path d="M4 10L8 0L12 10M5 7H11" stroke="#2a5a92" stroke-width="1.800"/>' + dimbar,
    dimtedit: '<path d="M13 1L6 9" stroke="#e8b020" stroke-width="3"/><path d="M6 8l-2 4l4 -2z" fill="#111"/>' + dimbar,
    dimupd: '<path d="M1 1v8M15 1v8M1 3.500h14" stroke="#2d6aa8"/><path d="M2 3.500l3 -2v4zM14 3.500l-3 -2v4z" fill="#2d6aa8" stroke="none"/><path d="M2.500 5v10M13.500 5v10M3 9.500h10"/><path d="M3 9.500l3 -2v4zM13 9.500l-3 -2v4z" fill="#222"/>',
    line: '<path d="M2 14L14 2"/>' + spot(2, 14) + spot(14, 2),
    xline: '<path d="M1 15L15 1"/><path d="M0 16l1 -5l4 4zM16 0l-1 5l-4 -4z" fill="#222"/>' + spot(8, 8),
    pline: '<path d="M1 12.500H10Q15 12 14 7Q13 4 8 4" stroke="#2d5a8e" stroke-width="1.400"/>' + spot(2, 12) + spot(10, 12) + spot(9, 4),
    polygon: '<path d="M8 1L15 6.500L12 14.500H4L1 6.500z" fill="url(#ice)"/>',
    rect: '<path d="M1.500 4.500h13v8h-13z" fill="url(#ice)"/>' + spot(2, 12) + spot(14, 4),
    arc: '<path d="M1 15Q2 4 15 2"/>' + spot(1, 14) + spot(5, 6) + spot(14, 2),
    circle: '<circle cx="8" cy="8" r="7" fill="url(#ice)"/><path d="M8 8L12 4" stroke="#2d5a8e" stroke-width="1.500"/>' + spot(7, 8),
    cloud: '<path d="M3 7Q-1 4 3 2Q7 -1 9 3Q15 2 13 7Q18 10 13 13Q9 18 7 13Q1 15 1 10Q1 7 5 7z" fill="#eef2fa"/>',
    spline: '<path d="M1 14C1 4 6 5 8 8S12 12 15 2" stroke-width="1.200"/>',
    ellipse: '<ellipse cx="8" cy="8" rx="6.500" ry="4" fill="url(#ice)"/>' + spot(1, 8) + spot(14, 8) + spot(8, 4),
    ellarc: '<path d="M2 10Q0 4 8 4Q15 4 15 9Q14 12 9 12" stroke="#2d5a8e" stroke-width="1.300"/>' + spot(2, 10) + spot(8, 12),
    insblock: '<path d="M7 1h5l3 3v7h-8z" fill="#d8ecfc" stroke="#3a6ea5"/><path d="M1.500 5.500h7v6h-7z" fill="#f0f090"/><circle cx="10" cy="11" r="3.500" fill="#d8e8a0"/><path d="M16 12v4h-4z" fill="#000"/>' + spot(2, 11),
    mkblock: '<path d="M3.500 3.500h9v6h-9z" fill="#f0f0a0"/><circle cx="11" cy="11" r="3.500" fill="#e0eaa0"/><path d="M2 10h6" stroke="#2d5a8e"/>' + spot(3, 10),
    point: spot(8, 8),
    hatch: '<path d="M3.500 0V16M12.500 0V16M0 3.500H16M0 12.500H16" stroke="#1f3f66" stroke-width="1.300"/><path d="M4 4l8 8M4 7l5 5M7 4l5 5M0 0l3 3M13 13l3 3" stroke="#4a88c0"/>',
    gradient: '<path d="M3 3h10v10h-10z" fill="#58625c"/><path d="M3.500 0V16M13.500 0V16M0 3.500H16M0 13.500H16" stroke="#111" stroke-width="1.300"/><path d="M13 3v5l-6 5h6z" fill="#8a9a70" stroke="none"/>',
    region: '<path d="M1 3.500H11L15 9V14H1z" fill="url(#ice)" stroke="#2d5a8e"/><circle cx="8" cy="9" r="3" fill="#eee" stroke="#2d5a8e"/>',
    table: '<path d="M1.500 1.500h13v13h-13z" fill="#e8f3ff" stroke="#3a78b8"/><path d="M2 3h12" stroke="#3a78b8" stroke-width="3"/><path d="M2 7.500h12M2 11h12M5.500 3v11M10 3v11" stroke="#3a78b8"/>',
    mtext: '<path d="M3 15L8 2L13 15M5 10.500H11.500" stroke="#111" stroke-width="1.700"/>',
    erase: '<path d="M15 1L9 6" stroke="#e8d040" stroke-width="4"/><path d="M15 1L4 11" stroke="#554" /><path d="M10 4L3 10L6 13L13 7z" fill="#f4f2ea"/><path d="M3 10L1 12L3 14L6 13z" fill="#e07878"/><path d="M0 15.500H15" stroke="#a03030"/>',
    copy: '<circle cx="4" cy="4" r="3" fill="#eef"/><circle cx="6" cy="11" r="3" fill="#fff"/><circle cx="12.500" cy="12.500" r="3" fill="#fff"/><path d="M8 2Q14 2 13 7" stroke="#2d5a8e" stroke-width="2"/><path d="M10 6h6l-3 3z" fill="#2d5a8e" stroke="none"/>',
    mirror: '<path d="M8 1v14" stroke="#2d5a8e"/><path d="M6 2V14H.5z" fill="#fff"/><path d="M10 2V14H15.500z" fill="url(#ice)"/>',
    offset: '<path d="M1 14.500H15V11H12Q13 2 8 2Q3 2 4 11H1z" fill="#bcdcf6" stroke="#2d5a8e" stroke-width="1.300"/><path d="M1 11.500H6V8Q6 5 8 5Q10 5 10 8V11.500H15" stroke="#2d5a8e"/>',
    array: '<path d="M.5 .5h6v6h-6zM9.500 .5h6v6h-6zM.5 9.500h6v6h-6zM9.500 9.500h6v6h-6z" fill="#eef4fa"/>',
    move: '<path d="M8 2V14M2 8H14" stroke="#4477ad" stroke-width="2.500"/><path d="M8 0l3.500 4h-7zM8 16l3.500 -4h-7zM0 8l4 -3.500v7zM16 8l-4 -3.500v7z" fill="#4477ad" stroke="none"/>',
    rotate: '<path d="M5 3Q12 1 14 7Q14 14 8 14.500Q2 14 2 8Q2 6 4 4" stroke="#4477ad" stroke-width="2.200"/><path d="M1 1h7l-1 6z" fill="#4477ad" stroke="none"/>',
    scale: '<path d="M.5 .5h15v15h-15z" fill="url(#ice)" stroke="#2d5a8e"/><path d="M.5 7.500h8v8h-8z" fill="#e4e0d8" stroke="#000" stroke-dasharray="1 1"/>',
    stretch: '<path d="M1.500 1.500H6V14.500H1.500z" fill="#fff" stroke="#234" stroke-dasharray="1 1"/><path d="M6 1.500H8L15 14.500H6z" fill="url(#ice)" stroke="#2d5a8e"/>',
    trim: '<path d="M0 8.500h6M10 8.500h6" stroke="#2d5a8e" stroke-dasharray="2 1"/><path d="M5 14L11 2" stroke="#2d5a8e"/>',
    extend: '<path d="M0 8.500h6" stroke="#222"/><path d="M7 8.500h4" stroke="#2d5a8e" stroke-dasharray="1 1"/><path d="M10 14L15 2" stroke="#2d5a8e" stroke-width="1.300"/>',
    breakpt: '<path d="M.5 3.500h15v10h-15z" fill="url(#ice)"/><path d="M8 2h3v3h-3z" fill="#123"/>',
    'break': '<path d="M5 3.500H.5v10h15v-10H11" fill="url(#ice)"/><path d="M4 2h3v3h-3zM10 2h3v3h-3z" fill="#123" stroke="none"/>',
    join: '<path d="M0 8h16"/><path d="M3 5l4 3l-4 3zM13 5l-4 3l4 3z" fill="#123a5c"/>',
    chamfer: '<path d="M1 8V1H8" stroke-dasharray="1 1"/><path d="M1 16V9L9 1H16" stroke="#222"/><path d="M1 9L9 1" stroke="#3f84c4" stroke-width="1.500"/>',
    fillet: '<path d="M1 8V1H8" stroke-dasharray="1 1"/><path d="M1 16V11Q2 2 10 1H16"/><path d="M1 11Q2 2 10 1" stroke="#3f84c4" stroke-width="1.500"/>',
    explode: '<path d="M1 8L4 7L4 4L8 6L11 5L11 9L13 12L9 12L8 15L5 13L1 14L3 11z" fill="#d84018" stroke="#902010"/><path d="M5 9l4 2" stroke="#f8e040" stroke-width="2"/><path d="M10 6L14 2M13 0l2 4" stroke="#333"/>',
    front: '<path d="M1 1h7v7h-7zM8 8h7v7h-7z" fill="#c2dcf2" stroke="#5a88b8"/><path d="M4 4h8v8h-8z" fill="#3a6ea5" stroke="#24507e"/>',
    back: '<path d="M5 5h6v6h-6z" fill="#3a6ea5" stroke="#24507e"/><path d="M1 1h7v7h-7zM8 8h7v7h-7z" fill="#c2dcf2" stroke="#5a88b8"/><path d="M8 3h4v5M3 8v4h5" stroke="#24507e"/>',
    above: '<path d="M7 7h8v8h-8z" fill="#c2dcf2" stroke="#5a88b8"/><path d="M1 1h11v10h-11z" fill="#3a6ea5" stroke="#24507e"/>',
    under: '<path d="M2 1h11v10h-11z" fill="#3a6ea5" stroke="#24507e"/>',
    ucs: axes,
    ucsdlg: axes + '<path d="M6.500 2.500h9v8h-9z" fill="#fff" stroke="#2d5a8e"/><path d="M7 3.500h8" stroke="#2d5a8e" stroke-width="2"/><path d="M8 7.500h6" stroke="#2d5a8e"/>',
    ucsprev: axes + '<path d="M15 5Q10 1 8 7" stroke="#1d3c70" stroke-width="2"/><path d="M5 6l6 1l-4 4z" fill="#1d3c70" stroke="none"/>',
    ucsworld: axes + '<circle cx="10.500" cy="5" r="4.500" fill="url(#ball)" stroke="#1d4c80"/><path d="M8 3l3 -1l1 3l-3 2z" fill="#3a9a40" stroke="none"/>',
    ucsobj: axes + '<path d="M7 3h8v6h-8z" fill="#1f5c96"/>',
    ucsface: axes + '<path d="M8 4l2 -2h5v5l-2 2h-5z" fill="#e8dc60" stroke="#444"/><path d="M13 4l2 -2v5l-2 2z" fill="#222"/>',
    ucsview: axes + '<path d="M6.500 2.500h9v8h-9z" fill="url(#ice)" stroke="#7898b8"/>',
    ucsorg: axes + '<path d="M1.500 11.500h4v4h-4z" fill="#fff" stroke="#000"/>',
    ucsz: axes + '<text x="10" y="7">Z</text>',
    ucs3: axes + '<text x="10" y="7">3</text>',
    ucsrx: axes + '<path d="M6 6Q7 2 13 2.500M11 0l3 2.500l-3 2"/><text x="8" y="12">X</text>',
    ucsry: axes + '<path d="M6 6Q7 2 13 2.500M11 0l3 2.500l-3 2"/><text x="8" y="12">Y</text>',
    ucsrz: axes + '<path d="M6 6Q7 2 13 2.500M11 0l3 2.500l-3 2"/><text x="8" y="12">Z</text>',
    ucsapply: axes + '<path d="M6.500 .5h9v4h-9zM11 1v4" fill="#fff" stroke="#2d5a8e"/><path d="M11 7v5M9 9l2 -2l2 2" stroke="#2d5a8e"/>',
    wire2d: '<path d="M.5 1.500h14v11h-14z" fill="#fff" stroke="#000"/><path d="M9 5L14 15H4z" fill="#fff" stroke="#000"/>',
    wire3d: '<path d="M1 4l3 -3h6v6l-3 3h-6zM1 4h6v6M7 4l3 -3M4 1v6h6M4 7l-3 3" stroke="#222"/><path d="M11 6L15 14Q11 17 7 14zM11 6v10" fill="#fff"/>',
    hidden: '<path d="M8 0L15 4V12L8 16L1 12V4z" fill="#fff"/><path d="M1 4L8 8L15 4M8 8V16"/>',
    flat: '<path d="M0 5L8 1L16 4V11L8 15L0 12z" fill="#5b9bd0" stroke="none"/><path d="M0 5L8 1L16 4L8 8z" fill="#9fd0f0" stroke="none"/><path d="M16 4V11L8 15V8z" fill="#3f7cb4" stroke="none"/>',
    gouraud: '<circle cx="8" cy="8" r="7" fill="url(#ball)" stroke="none"/>',
    flatedge: '<path d="M0 5L6 1L15 3V12L9 16L0 13z" fill="#7db4e0"/><path d="M15 3V12L9 16V7z" fill="#4580b8"/><path d="M0 5L9 7L15 3M9 7V16"/>',
    gouredge: '<circle cx="8" cy="8" r="7" fill="url(#ball)" stroke="#456"/><path d="M3 3Q10 7 13 13M13 3Q6 7 3 13" stroke="#234"/>',
    orbit: '<circle cx="8" cy="8" r="5" fill="#30b048" stroke="#106020"/><path d="M5 6q3 -2 5 -1" stroke="#b8f0b0" stroke-width="1.500"/><path d="M5 10Q-2 15 2 15Q12 12 15 3Q16 0 11 4" stroke="#2d6aa8" stroke-width="1.600"/>',
    corbit: '<circle cx="10" cy="7" r="4.500" fill="#30b048" stroke="#106020"/><path d="M5 11Q14 9 15 3Q16 0 12 3" stroke="#2d6aa8" stroke-width="1.500"/><path d="M1 16L8 9" stroke="#173c70" stroke-width="2"/><path d="M4 8h5v5z" fill="#173c70" stroke="none"/>',
    swivel: '<path d="M1 6v5h4v-5zM6 6v5h4v-5zM3 5l2 -2h2" fill="#445" stroke="#223"/><path d="M11 3Q17 7 11 14" stroke="#555" stroke-width="1.500"/>',
    dist: '<path d="M1 2v6h4v-6zM7 2v6h4v-6z" fill="#445"/><path d="M0 11h10v4h-10z" fill="#f0c030" stroke="#a07010"/><path d="M2 11v3M5 11v3M8 11v3"/><path d="M11 12h4M13 10l2 2l-2 2" stroke="#123a70" stroke-width="1.300"/>',
    clip: '<path d="M4 1h11v4l-3 2h-8zM3 9h10v6h-10z" fill="#4880c8" stroke="#183c88"/><path d="M0 4h5M10 12l5 3M1 2l-1 2l2 2" stroke="#103080" stroke-width="1.500"/><path d="M4 7h8l-3 3" fill="#c8e0f8" stroke="#183c88"/>',
    front3: '<path d="M.5 1.500h15v14h-15z" fill="#e8b828" stroke="#8a6a10"/><path d="M3 8L7 4H14V9L10 12H3z" fill="#f4e8a0"/><path d="M3 8h7v4M10 8l4 -4M5 10h3"/>',
    back3: '<path d="M.5 2.500h13v13h-13z" fill="#4070c8" stroke="#204088"/><path d="M5 6L8 2H16V8L12 12H5z" fill="#a8c8f0" stroke="#204088"/><path d="M5 6h7v6M12 6l4 -4" stroke="#204088"/>',
    named: '<path d="M.5 1.500H11L15 4V14H.5z" fill="#eaf5ff" stroke="#7898b0"/><path d="M6.500 7.500h9v8h-9z" fill="#fff" stroke="#2d5a8e"/><path d="M7 8.500h8" stroke="#2d5a8e" stroke-width="2"/><path d="M8 12h6M2 11l4 -6l3 1" stroke="#345"/>',
    vtop: cube('top'),
    vbottom: cube('bottom'),
    vleft: cube('left'),
    vright: cube('right'),
    vfront: cube('front'),
    vback: cube('back'),
    vsw: gem('M1 6L8 10V16z'),
    vse: gem('M15 6L8 10V16z'),
    vne: gem('M15 6L8 10V0z'),
    vnw: gem('M1 6L8 10V0z'),
    first: '<path d="M4 4v8" stroke="#000" stroke-width="2"/><path d="M11 3v10l-5 -5z" fill="#000" stroke="none"/>',
    prev: '<path d="M10 3v10l-5 -5z" fill="#000" stroke="none"/>',
    next: '<path d="M6 3v10l5 -5z" fill="#000" stroke="none"/>',
    last: '<path d="M12 4v8" stroke="#000" stroke-width="2"/><path d="M5 3v10l5 -5z" fill="#000" stroke="none"/>',
    pickadd: '<path d="M1 1h14v14h-14z" fill="#dcecfa" stroke="#111" stroke-dasharray="1 1"/><path d="M3 3h10v10h-10z" stroke="#2d5a8e" stroke-dasharray="1 1"/><path d="M8 4v8M4 8h8" stroke="#2858b8" stroke-width="2"/>',
    selobj: '<path d="M1.500 1.500h10v12h-10z" fill="#fff" stroke="#2d5a8e"/><path d="M4 2l5 5M9 2l-5 5" stroke="#c01830" stroke-width="1.500"/><path d="M9 6v8l2 -2l2 4l1 -1l-1 -4h3z" fill="#fff" stroke="#222"/>',
    qselect: '<path d="M0 2Q6 -1 12 2L8 8V14L5 12V8z" fill="#5a8ec8" stroke="#24507e"/><path d="M15 3L9 9L12 9L9 15L16 8H13z" fill="#f0e020" stroke="#807000" stroke-width=".7"/>',
    chev: '<path d="M4 7.500L8 4L12 7.500M4 12.500L8 9L12 12.500" stroke="#fff" stroke-width="1.500"/>',
    lock: '<path d="M8 7V4Q9 1 12 1Q15 1 15 5" stroke="#8a8410" stroke-width="2"/><path d="M1.500 7.500h9v8h-9z" fill="#d8c818" stroke="#4a4400"/><path d="M6 10v3" stroke-width="2"/>',
    plotter: '<path d="M1 5L7 2L14 5L8 8z" fill="#c4d8e4" stroke="#7890a0"/><path d="M6.500 6.500h8v9h-8z" fill="#eaf5ff" stroke="#2d6aa0"/><path d="M8 9h5M8 11.500h5M8 13.500h5" stroke="#2d6aa0"/>',
    flag: '<path d="M3 3Q6 1 8 3L7 8Q5 6 2 8z" fill="#e85020" stroke="none"/><path d="M9 3Q12 5 15 3L14 8Q11 10 8 8z" fill="#58b030" stroke="none"/><path d="M2 9Q5 7 7 9L6 14Q4 12 1 14z" fill="#3878d8" stroke="none"/><path d="M8 9Q11 11 14 9L13 14Q10 16 7 14z" fill="#f0c020" stroke="none"/>',
    ie: '<circle cx="8" cy="9" r="5" stroke="#2478c8" stroke-width="3"/><path d="M4 9H13" stroke="#2478c8" stroke-width="2"/><path d="M1 15Q0 9 8 4Q15 0 15 4" stroke="#5ab0e8" stroke-width="1.500"/>',
    outlook: '<path d="M1 2h11l3 3v10h-14z" fill="#d0e8fa" stroke="#2878b8"/><path d="M12 4Q5 3 5 8Q6 13 12 10M5 8h6" stroke="#2878c8" stroke-width="1.800"/>',
    search: '<path d="M0 4h5l2 2h8v9h-15z" fill="#f5dc80" stroke="#a88020"/><circle cx="9" cy="9" r="4" fill="#e0f0fa" stroke="#889"/><path d="M5 15l2 -3" stroke="#a05020" stroke-width="2"/>',
    view: '<path d="M1 1h8v10h-8z" fill="#f8f020" stroke="#808"/><path d="M1 15V9L16 15z" fill="#e01818"/><circle cx="8" cy="6" r="4" fill="#e8f4ff" stroke="#1c3c90"/><path d="M11 9l4 5" stroke="#1c3c90" stroke-width="2"/>',
    wmp: '<circle cx="8" cy="8" r="7" fill="#e87820" stroke="#b05010"/><path d="M8 1A7 7 0 0 1 15 8H8z" fill="#48a848" stroke="none"/><path d="M1 8A7 7 0 0 0 8 15V8z" fill="#3878d0" stroke="none"/><circle cx="8" cy="8" r="4.500" fill="#f4f4f4" stroke="none"/><path d="M6.500 5v6l4.500 -3z" fill="#111" stroke="none"/>',
    folder: '<path d="M1 3h5l2 2h6v9h-13z" fill="#e8c050" stroke="#987020"/><path d="M3 7h13l-2 7h-13z" fill="#fbe890" stroke="#987020"/>',
    excel: '<path d="M.5 .5h15v15h-15z" fill="#e4f4e0" stroke="#1c6c30"/><path d="M4 4L11 12M11 4L4 12" stroke="#1c7c38" stroke-width="3"/><path d="M12 4h3M12 8h3M12 12h3" stroke="#1c7c38"/>',
    keyboard: '<path d="M.5 6.500h15v8h-15z" fill="#fff" stroke="#000"/><path d="M2 8.500h12M2 10.500h12M3 12.500h10" stroke="#000" stroke-dasharray="1 1"/><path d="M5 6Q4 3 8 4T11 1" stroke="#000"/>',
    safe: '<path d="M2 4L8 2L13 6L12 9L5 8z" fill="#38a838" stroke="#186018"/><path d="M3 9L10 8L14 12L8 15z" fill="#c0c4c8" stroke="#606870"/><path d="M1 1l5 6" stroke="#50c850" stroke-width="2"/>',
    rising: '<path d="M1 1h14v14h-14z" fill="#fff" stroke="#e01010" stroke-width="2"/><path d="M3 5L7 3L8 12M8 4l4 9M4 11q-1 -4 2 -5M10 12h4" stroke="#e01010" stroke-width="2"/>',
    net: '<path d="M6.500 1.500h8v6h-8zM1.500 6.500h8v6h-8z" fill="#2850b8" stroke="#8898b8"/><path d="M10 10h4M3 14.500h6" stroke="#607090" stroke-width="2"/>',
    kav: '<path d="M1 1h5v5l4 -5h5l-6 7l6 7h-5l-4 -5v5h-5z" fill="#d81010" stroke="none"/><path d="M9 9h6v6z" fill="#111"/>',
    sound: '<circle cx="7" cy="7" r="5.500" fill="#a8acb4" stroke="#585c64"/><circle cx="6" cy="7" r="2.500" fill="#e0e2e6" stroke="#585c64"/><path d="M11 13Q15 11 15 6" stroke="#98a0b0"/>',
    power: '<circle cx="8" cy="8" r="6.500" fill="#f8d0d0" stroke="#e02828" stroke-width="2"/><path d="M8 4v4M5.500 6Q4 11 8 11Q12 11 10.500 6" stroke="#e02828" stroke-width="1.400"/>',
    info: '<path d="M8 1A6.500 6.500 0 1 1 5 14L8 17L9 14" fill="#fff" stroke="#8a98b8"/><circle cx="8" cy="7.500" r="6.500" fill="#f2f7ff" stroke="#98a8c8"/><path d="M8 3v2M8 6.500v5M6.500 11.500h3" stroke="#2048c0" stroke-width="2"/>'
};

function svg(name) {
    let box = name === 'layerstate' ? '0 0 78 18' : '0 0 16 16';
    return `<svg class="i" viewBox="${box}" aria-hidden="true">${icons[name]}</svg>`;
}

document.querySelectorAll('[data-icon]').forEach(el => {
    el.innerHTML = svg(el.dataset.icon);
});

document.querySelectorAll('[data-tools]').forEach(el => {
    el.innerHTML = el.dataset.tools.split(' ').map(name => {
        if (name === '|') {
            return '<span class="sep"></span>';
        }
        let cls = name.startsWith('dd') ? ' class="dd"' : '';
        return `<button${cls} aria-label="${name}">${svg(name)}</button>`;
    }).join('');
});
```
